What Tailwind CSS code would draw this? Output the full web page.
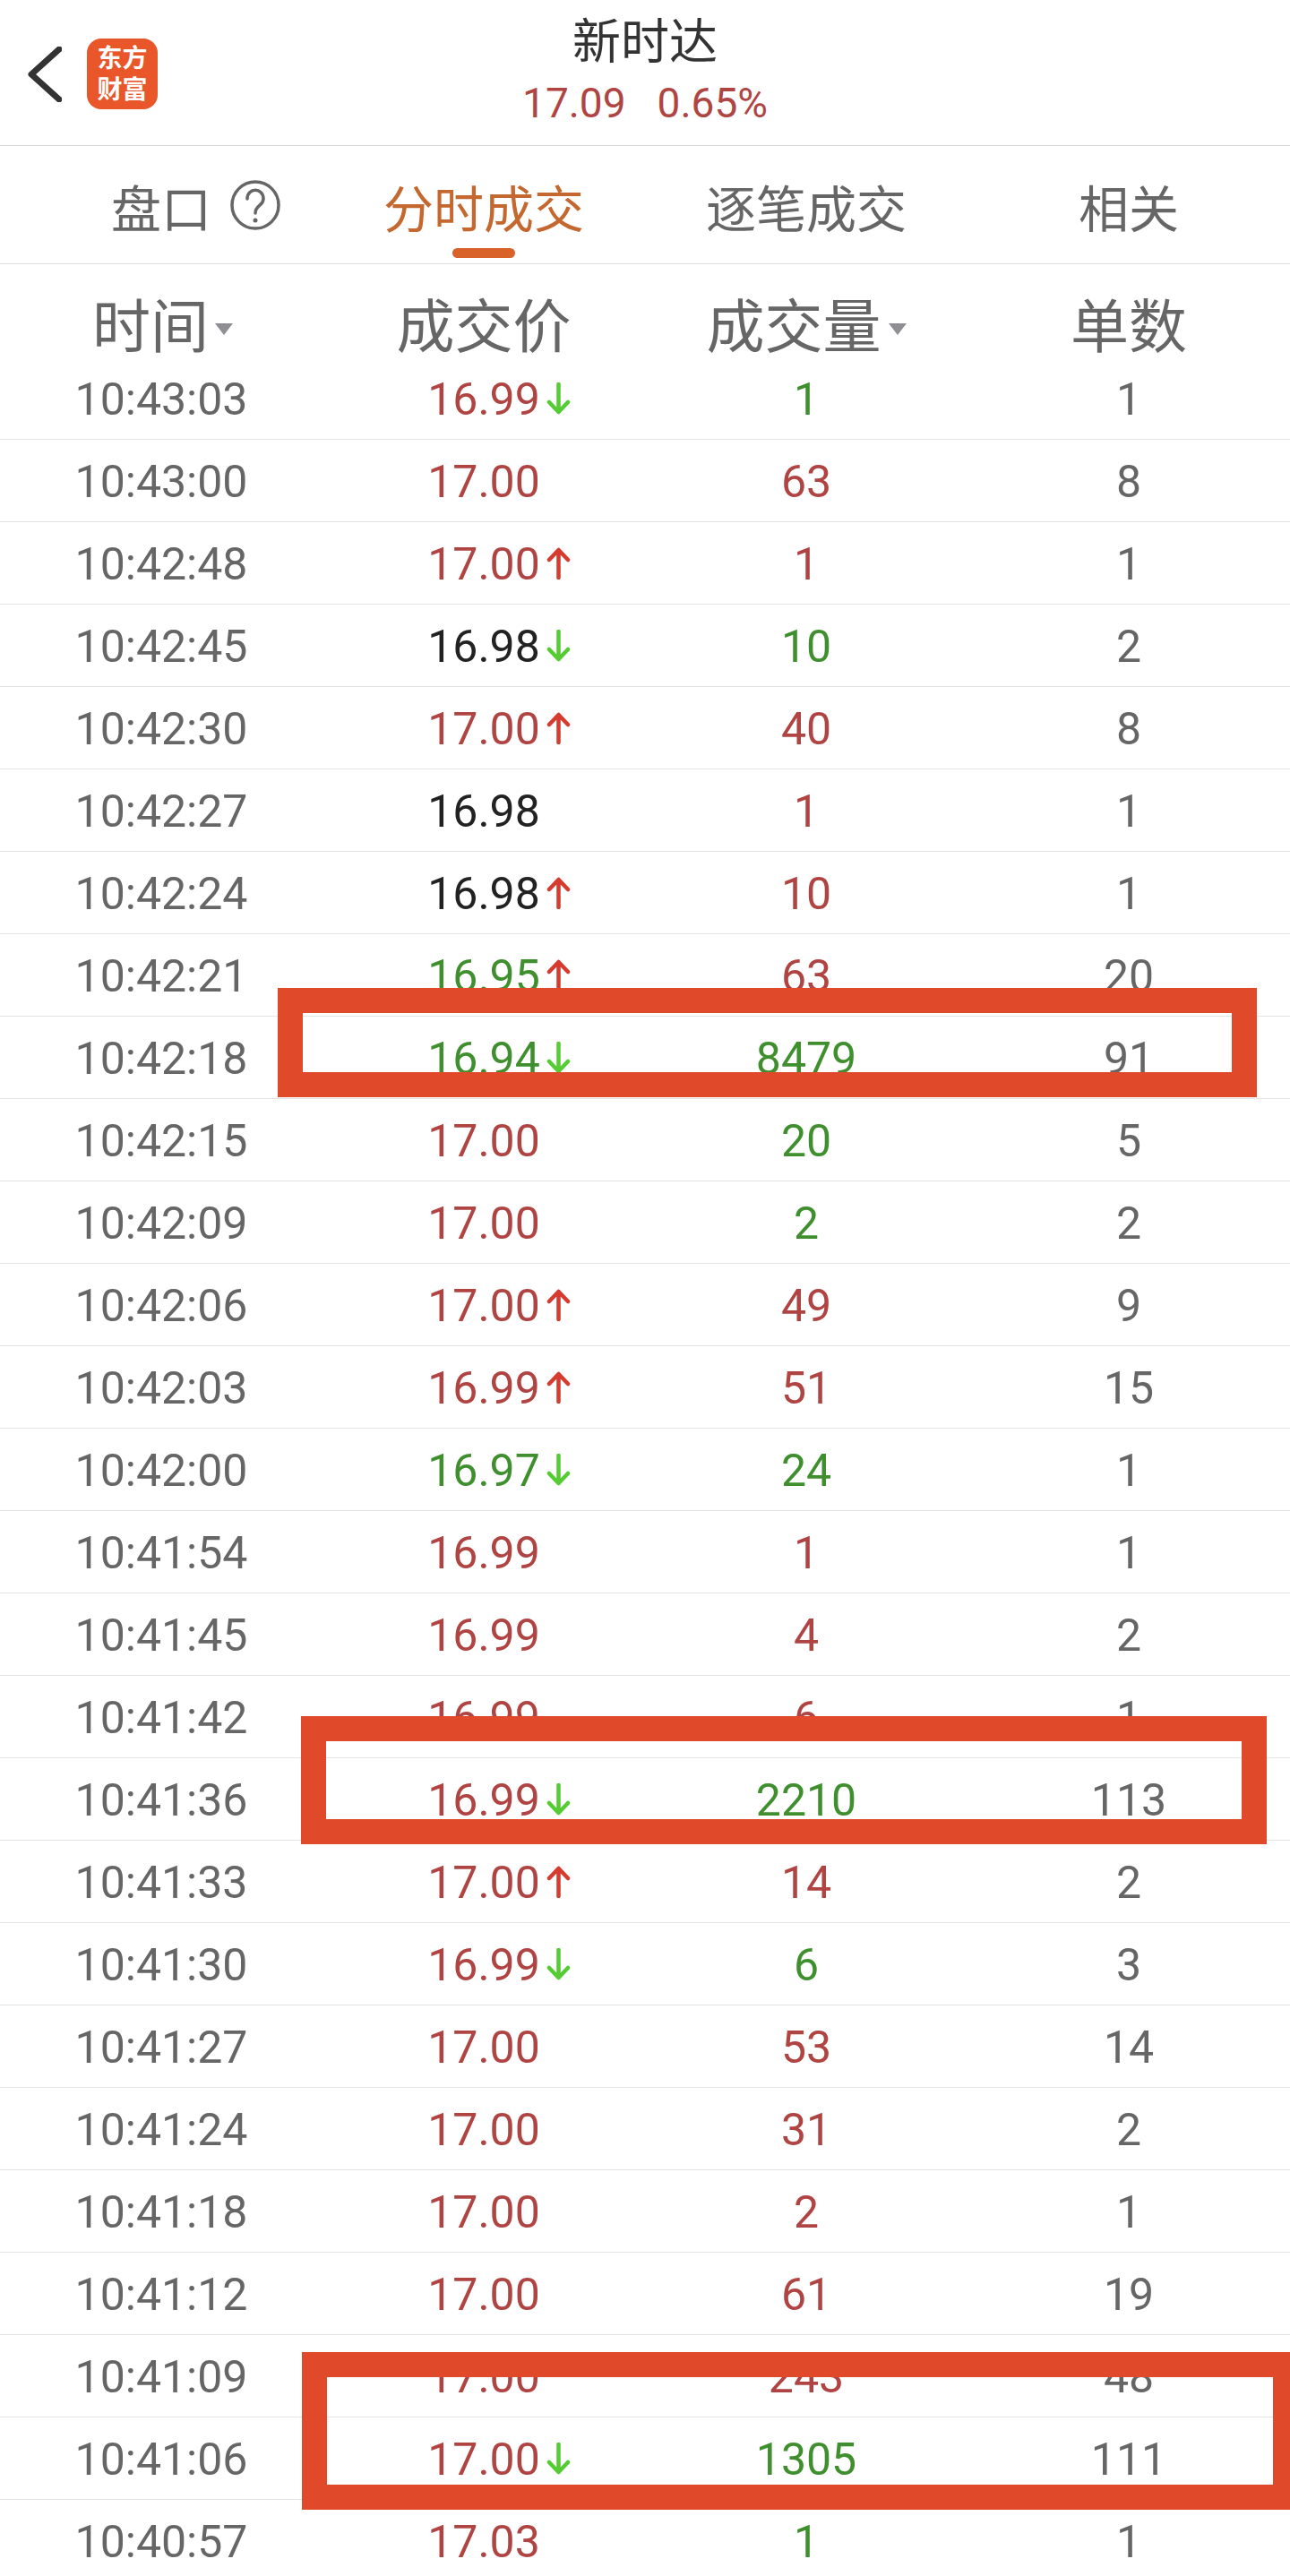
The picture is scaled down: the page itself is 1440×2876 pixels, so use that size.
<!DOCTYPE html>
<html lang="zh-CN">
<head>
  <meta charset="UTF-8" />
  <meta name="viewport" content="width=device-width, initial-scale=1.0" />
  <title>新时达</title>
  <script src="https://cdn.jsdelivr.net/npm/@tailwindcss/browser@4"></script>
</head>
<body class="bg-white font-['Roboto','Noto_Sans_CJK_SC',sans-serif] text-[#666]">
  <div class="relative w-[1440px] h-[2876px] overflow-hidden">

    <!-- Header -->
    <header class="relative h-[163px] border-b border-[#d8d8d8] flex flex-col items-center">
      <svg class="absolute left-[31px] top-[52px] w-[38px] h-[62px]" viewBox="0 0 38 62" fill="none" stroke="#333" stroke-width="7" stroke-linecap="round" stroke-linejoin="round">
        <path d="M35 3 L4 31 L35 59" />
      </svg>
      <div class="absolute left-[97px] top-[43px] w-[79px] h-[79px] rounded-[16px] bg-[#e8562a] text-white text-[28px] font-bold leading-[35px] flex flex-col items-center justify-center">
        <span>东方</span>
        <span>财富</span>
      </div>
      <h1 class="text-[54px] leading-[54px] mt-[21px] text-[#333]">新时达</h1>
      <p class="text-[46px] leading-[46px] mt-[17px] text-[#b04442] flex gap-[35px]">
        <span>17.09</span>
        <span>0.65%</span>
      </p>
    </header>

    <!-- Tabs -->
    <nav class="h-[132px] border-b border-[#dcdcdc] grid grid-cols-4 text-[56px] leading-[56px] text-center">
      <div class="relative flex items-center justify-start pl-[124px] gap-[20px]">
        <span class="pt-[12px]">盘口</span>
        <svg class="w-[58px] h-[56px] shrink-0" viewBox="0 0 58 56" fill="none" stroke="#666" stroke-width="3.5">
          <circle cx="29" cy="28" r="26" />
          <path d="M20 21 C20 8 38 8 38 21 C38 29 29 28 29 37" stroke-linecap="round" />
          <circle cx="29" cy="45" r="2.5" fill="#666" stroke="none" />
        </svg>
      </div>
      <div class="relative flex items-center justify-center pt-[12px] text-[#c4682f]">
        分时成交
        <span class="absolute left-[145px] top-[114px] w-[70px] h-[11px] rounded-full bg-[#d9622b]"></span>
      </div>
      <div class="flex items-center justify-center pt-[12px]">逐笔成交</div>
      <div class="flex items-center justify-center pt-[12px]">相关</div>
    </nav>

    <!-- Table head -->
    <div class="h-[104px] grid grid-cols-4 text-[65px] leading-[65px] items-center pt-[38px]">
      <div class="flex items-center justify-center pl-[3px]">
        <span>时间</span>
        <span class="ml-[7px] mt-[2px] w-0 h-0 border-x-[10px] border-x-transparent border-t-[13px] border-t-[#8e8e93]"></span>
      </div>
      <div class="text-center">成交价</div>
      <div class="flex items-center justify-center">
        <span>成交量</span>
        <span class="ml-[8px] mt-[2px] w-0 h-0 border-x-[10px] border-x-transparent border-t-[13px] border-t-[#8e8e93]"></span>
      </div>
      <div class="text-center">单数</div>
    </div>

    <!-- Rows -->
    <div id="rows"></div>

    <!-- Hand-drawn highlight boxes -->
    <div class="absolute left-[310px] top-[1103px] w-[1093px] h-[122px] border-x-[28px] border-y-[28px] border-[#e04a2a]"></div>
    <div class="absolute left-[336px] top-[1916px] w-[1078px] h-[143px] border-x-[28px] border-y-[28px] border-[#e04a2a]"></div>
    <div class="absolute left-[337px] top-[2626px] w-[1103px] h-[176px] border-l-[28px] border-y-[28px] border-r-[19px] border-[#e04a2a]"></div>
  </div>

  <script>
    const RED = "text-[#b04442]";
    const GREEN = "text-[#3f8f2f]";
    const BLACK = "text-[#222]";

    const trades = [
      ["10:43:03", "16.99", RED, "down", "1", GREEN, "1"],
      ["10:43:00", "17.00", RED, "", "63", RED, "8"],
      ["10:42:48", "17.00", RED, "up", "1", RED, "1"],
      ["10:42:45", "16.98", BLACK, "down", "10", GREEN, "2"],
      ["10:42:30", "17.00", RED, "up", "40", RED, "8"],
      ["10:42:27", "16.98", BLACK, "", "1", RED, "1"],
      ["10:42:24", "16.98", BLACK, "up", "10", RED, "1"],
      ["10:42:21", "16.95", GREEN, "up", "63", RED, "20"],
      ["10:42:18", "16.94", GREEN, "down", "8479", GREEN, "91"],
      ["10:42:15", "17.00", RED, "", "20", GREEN, "5"],
      ["10:42:09", "17.00", RED, "", "2", GREEN, "2"],
      ["10:42:06", "17.00", RED, "up", "49", RED, "9"],
      ["10:42:03", "16.99", RED, "up", "51", RED, "15"],
      ["10:42:00", "16.97", GREEN, "down", "24", GREEN, "1"],
      ["10:41:54", "16.99", RED, "", "1", RED, "1"],
      ["10:41:45", "16.99", RED, "", "4", RED, "2"],
      ["10:41:42", "16.99", RED, "", "6", RED, "1"],
      ["10:41:36", "16.99", RED, "down", "2210", GREEN, "113"],
      ["10:41:33", "17.00", RED, "up", "14", RED, "2"],
      ["10:41:30", "16.99", RED, "down", "6", GREEN, "3"],
      ["10:41:27", "17.00", RED, "", "53", RED, "14"],
      ["10:41:24", "17.00", RED, "", "31", RED, "2"],
      ["10:41:18", "17.00", RED, "", "2", RED, "1"],
      ["10:41:12", "17.00", RED, "", "61", RED, "19"],
      ["10:41:09", "17.00", RED, "", "243", RED, "48"],
      ["10:41:06", "17.00", RED, "down", "1305", GREEN, "111"],
      ["10:40:57", "17.03", RED, "", "1", GREEN, "1"],
    ];

    const arrows = {
      up: `<svg class="absolute left-[133px] top-[6px] w-[27px] h-[36px]" viewBox="0 0 27 36" fill="none" stroke="#d63b30" stroke-width="4.5" stroke-linecap="round" stroke-linejoin="round"><path d="M13.5 34 V3 M3 14 L13.5 3 L24 14" /></svg>`,
      down: `<svg class="absolute left-[133px] top-[6px] w-[27px] h-[36px]" viewBox="0 0 27 36" fill="none" stroke="#55cc33" stroke-width="4.5" stroke-linecap="round" stroke-linejoin="round"><path d="M13.5 2 V33 M3 22 L13.5 33 L24 22" /></svg>`,
      "": "",
    };

    document.getElementById("rows").innerHTML = trades.map(t => `
      <div class="h-[92px] border-b border-[#e4e4e4] grid grid-cols-4 items-center text-center text-[50px] leading-[50px] pt-[2px]">
        <div>${t[0]}</div>
        <div class="flex justify-center"><span class="relative ${t[2]}">${t[1]}${arrows[t[3]]}</span></div>
        <div class="${t[5]}">${t[4]}</div>
        <div>${t[6]}</div>
      </div>`).join("");
  </script>
</body>
</html>
